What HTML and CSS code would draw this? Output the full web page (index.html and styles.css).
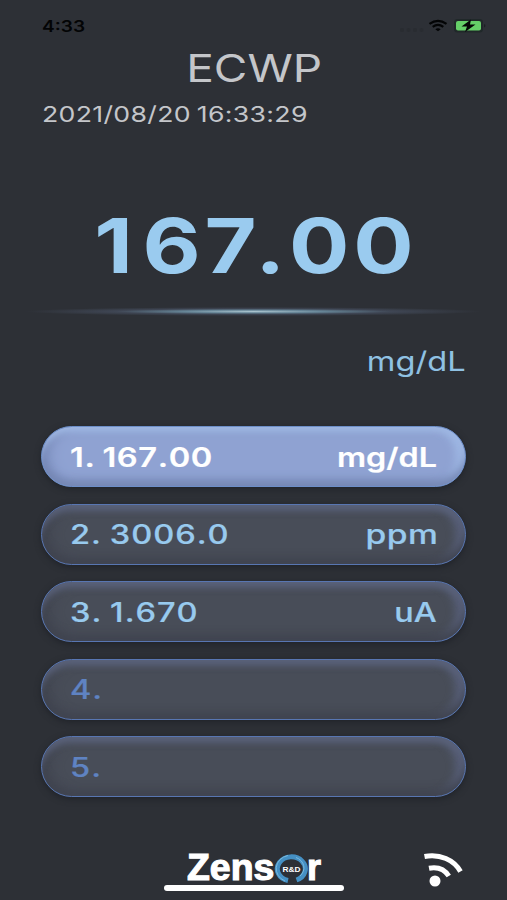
FILE: index.html
```html
<!DOCTYPE html>
<html lang="en">
<head>
<meta charset="utf-8">
<meta name="viewport" content="width=device-width">
<title>ECWP</title>
<link rel="stylesheet" href="styles.css">
</head>
<body>
<main class="screen">
  <header class="status">
    <span class="clock">4:33</span>
    <svg class="status-icons" width="88" height="18" viewBox="0 0 88 18">
      <g fill="#292c31"><circle cx="4" cy="13" r="2"/><circle cx="10.500" cy="13" r="2"/><circle cx="17" cy="13" r="2"/><circle cx="23.500" cy="13" r="2"/></g>
      <g fill="none" stroke="#030405" stroke-width="2.200"><path d="M31.500 6.800Q40 .800 48.500 6.800"/><path d="M34.700 9.900Q40 6 45.300 9.900"/></g>
      <path d="M37.300 12.200Q40 10.300 42.700 12.200L40 14.300Z" fill="#030405"/>
      <rect x="56" y="2" width="29" height="13.500" rx="3.500" fill="#202829"/>
      <rect x="58" y="4" width="25" height="9.500" rx="2" fill="#65cf68"/>
      <path d="M86.300 7q2 1.700 0 3.500z" fill="#17191c"/>
      <path d="M73 2.500L63.500 9.500h5.500l-2 5.500L77.500 7.500H72z" fill="#050706"/>
    </svg>
  </header>
  <h1 class="title"><span>ECWP</span></h1>
  <p class="date"><span>2021/08/20 16:33:29</span></p>
  <p class="reading"><span><b class="one">1</b>6<b class="seven">7</b>.00</span></p>
  <div class="beam"></div>
  <p class="unit"><span>mg/dL</span></p>
  <ul class="rows">
    <li class="row active"><span class="value">1. 167.00</span><span class="measure">mg/dL</span></li>
    <li class="row"><span class="value">2. 3006.0</span><span class="measure wide">ppm</span></li>
    <li class="row"><span class="value">3. 1.670</span><span class="measure">uA</span></li>
    <li class="row empty"><span class="value">4.</span></li>
    <li class="row empty"><span class="value">5.</span></li>
  </ul>
  <footer class="footer">
    <div class="brand">
      <div class="logo"><span class="zens">Zens</span><svg class="ring" width="34" height="32" viewBox="0 0 34 32">
        <path d="M14 27.500A14 12 0 1 1 22.500 27" fill="none" stroke="#4590c4" stroke-width="5"/>
        <path d="M11 28A15 13.500 0 0 1 14 2.500M22 4.500A12 11 0 0 1 26 23" fill="none" stroke="#79b9dd" stroke-width="1"/>
        <text class="rd" x="17.500" y="18.500" text-anchor="middle" textLength="18" lengthAdjust="spacingAndGlyphs">R&amp;D</text>
      </svg><span class="r">r</span></div>
      <div class="home"></div>
    </div>
    <svg class="signal" width="42" height="36" viewBox="0 0 42 36">
      <circle cx="13" cy="29" r="5.500" fill="#fff"/>
      <g fill="none" stroke="#fff" stroke-width="5"><path d="M2.500 4.500C18 1.500 32 8 38.500 19.500"/><path d="M7 16.200C16 14.500 23 18 26.800 24"/></g>
    </svg>
  </footer>
</main>
</body>
</html>
```
FILE: styles.css
```css
* { box-sizing: border-box; margin: 0; padding: 0; }
body { background: #2d3036; font-family: Inter, sans-serif; }
.screen { width: 507px; height: 900px; overflow: hidden; background: #2d3036; display: flex; flex-direction: column; }
.screen span { display: inline-block; white-space: nowrap; }
.status { height: 48px; padding: 17px 21px 0 42px; display: flex; justify-content: space-between; }
.clock { font-size: 15.500px; line-height: 19px; font-weight: 600; color: #030405; transform: scaleX(1.23); transform-origin: left; }
.title { height: 41px; padding-left: 1px; line-height: 41px; font-size: 38px; font-weight: 400; color: #c4c6ca; text-align: center; }
.title span { transform: scaleX(1.21); }
.date { height: 50px; padding: 11px 0 0 42px; line-height: 28px; font-size: 21.500px; color: #c4c6ca; letter-spacing: .25px; word-spacing: -1.500px; font-kerning: none; }
.date span { transform: scaleX(1.24); transform-origin: left; }
.reading { height: 165px; padding: 60px 0 0 4px; line-height: 92px; font-size: 76px; font-weight: 700; color: #9acbef; text-align: center; letter-spacing: 3.200px; font-kerning: none; }
.reading span { transform: scaleX(1.18); }
.reading b { font-weight: inherit; }
.one { letter-spacing: 8px; }
.seven { letter-spacing: -1.200px; }
.beam { height: 14px; background: radial-gradient(ellipse 45% 50% at 50% 50%, #a9c3ce 0%, rgba(112,148,168,.85) 30%, rgba(75,85,105,.6) 60%, transparent 100%) 0 3px / 507px 9px no-repeat; }
.unit { height: 108px; padding: 27px 41px 0 0; line-height: 34px; font-size: 27px; color: #8fc1e3; text-align: right; }
.unit span { transform: scaleX(1.21); transform-origin: right; }
.rows { list-style: none; display: flex; flex-direction: column; gap: 16.500px; padding: 0 41px; }
.row { height: 61px; border: 1.500px solid #5876b2; border-radius: 31px; padding: 0 28px; display: flex; align-items: center; justify-content: space-between; font-size: 26.500px; line-height: 34px; font-weight: 500; color: #98caee; background: #484d58; box-shadow: inset 0 9px 6px -3px #596179, inset 0 -9px 9px -3px #404450, inset 10px 0 13px -3px #40444f, inset -12px 0 8px -3px #58607a, 0 2px 6px #202329; }
.row.active { color: #fff; font-weight: 600; background: #8fa2d2; border-color: #6c8ec8; box-shadow: inset 0 8px 6px -3px #9eb7e3, inset 0 -9px 8px -3px #7587b4, inset 9px 0 13px -3px #7587b5, inset -12px 0 9px -3px #9fb8e4, 0 2px 6px #202329; }
.row.empty { color: #5f83c2; }
.value { transform: scaleX(1.23); transform-origin: left; letter-spacing: .8px; word-spacing: -1.500px; font-kerning: none; -webkit-text-stroke: .2px currentColor; }
.active .value { letter-spacing: .5px; }
.measure { transform: scaleX(1.22); transform-origin: right; -webkit-text-stroke: .2px currentColor; }
.measure.wide { transform: scaleX(1.27); letter-spacing: .4px; margin-right: -1px; }
.footer { height: 103px; padding: 54px 43px 0 164px; display: flex; justify-content: space-between; }
.brand { width: 180px; }
.logo { height: 34px; padding-left: 23px; display: flex; align-items: center; color: #fff; font-family: "Liberation Sans", sans-serif; font-size: 36px; font-weight: 700; line-height: 34px; }
.zens { width: 88px; -webkit-text-stroke: 1.100px #fff; transform: scaleX(1.04); transform-origin: left; }
.ring { flex: none; margin-left: -1px; margin-top: 2px; }
.r { -webkit-text-stroke: 1.100px #fff; margin-left: -1px; }
.rd { font: 700 8px "Liberation Sans", sans-serif; fill: #fff; }
.home { position: relative; height: 6px; border-radius: 3px; background: #fff; }
.signal { margin-top: 1px; }
```
